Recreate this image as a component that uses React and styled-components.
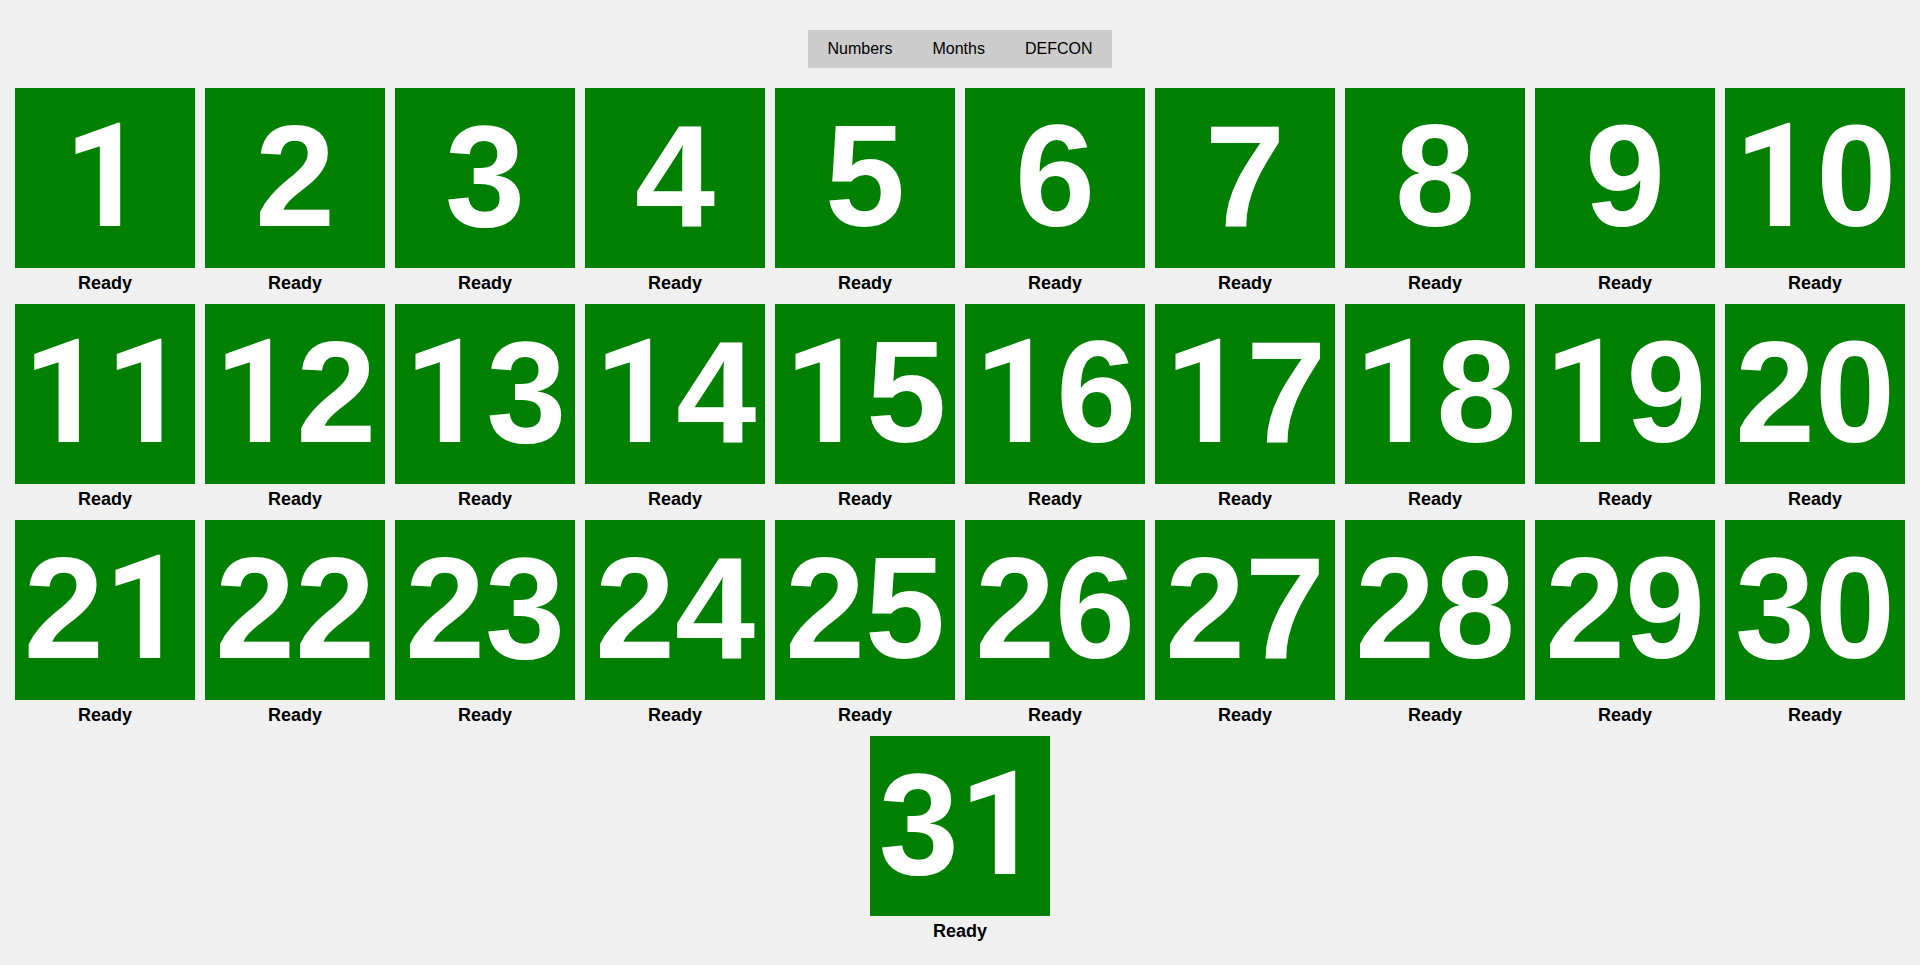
import React, { useState } from "react";
import styled, { createGlobalStyle } from "styled-components";

const GlobalStyle = createGlobalStyle`
  body {
    margin: 8px;
    background: #f0f0f0;
    font-family: "Liberation Sans", Arial, sans-serif;
  }
`;

const TabBar = styled.div`
  display: flex;
  width: fit-content;
  margin: 22px auto 15px;
  background: #cccccc;
  height: 38px;
`;

const Tab = styled.button`
  border: none;
  background: ${(p) => (p.$active ? "#cccccc" : "transparent")};
  font-family: "Liberation Sans", Arial, sans-serif;
  font-size: 16px;
  color: #000;
  padding: 0 20px;
  height: 38px;
  cursor: pointer;
`;

const Board = styled.div`
  display: flex;
  flex-wrap: wrap;
  justify-content: center;
`;

const Cell = styled.div`
  display: flex;
  flex-direction: column;
  align-items: center;
  margin: 5px;
  width: 180px;
`;

const Tile = styled.div`
  width: 180px;
  height: 180px;
  background: ${(p) => p.$color};
  color: #fff;
  display: flex;
  align-items: center;
  justify-content: center;
  font-family: "Liberation Sans", Arial, sans-serif;
  font-weight: bold;
  font-size: 144px;
  line-height: 1;
  padding-bottom: 2px;
  box-sizing: border-box;
  white-space: nowrap;
`;

// Liberation's "1" has a foot; Roboto's is plain like Arial's
const One = styled.span`
  font-family: Roboto, "Liberation Sans", Arial, sans-serif;
`;

const Label = styled.div`
  margin-top: 5px;
  height: 21px;
  line-height: 21px;
  font-size: 18px;
  font-weight: bold;
  color: #000;
`;

const tabs = ["Numbers", "Months", "DEFCON"];

function Digits({ value }) {
  return String(value)
    .split("")
    .map((d, i) => (d === "1" ? <One key={i}>1</One> : <React.Fragment key={i}>{d}</React.Fragment>));
}

export default function App() {
  const [tab, setTab] = useState("Numbers");
  const items = Array.from({ length: 31 }, (_, i) => i + 1);
  return (
    <>
      <GlobalStyle />
      <TabBar>
        {tabs.map((t) => (
          <Tab key={t} $active={t === tab} onClick={() => setTab(t)}>
            {t}
          </Tab>
        ))}
      </TabBar>
      <Board>
        {items.map((n) => (
          <Cell key={n}>
            <Tile $color="#008000">
              <Digits value={n} />
            </Tile>
            <Label>Ready</Label>
          </Cell>
        ))}
      </Board>
    </>
  );
}
